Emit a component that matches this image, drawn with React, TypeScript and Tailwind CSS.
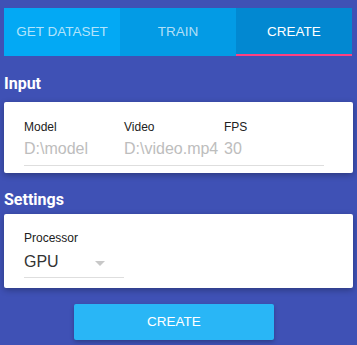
export default function App() {
  const tabs = [
    { label: 'GET DATASET', bg: 'bg-[#03a9f4]', active: false },
    { label: 'TRAIN', bg: 'bg-[#039be5]', active: false },
    { label: 'CREATE', bg: 'bg-[#0288d1]', active: true },
  ];

  const fields = [
    { label: 'Model', value: 'D:\\model' },
    { label: 'Video', value: 'D:\\video.mp4' },
    { label: 'FPS', value: '30' },
  ];

  return (
    <div className="w-[357px] h-[345px] overflow-hidden bg-[#3f51b5] pt-[8px] px-[4px] font-['Liberation_Sans',Arial,sans-serif]">
      <div className="flex w-[348px] h-[48px]">
        {tabs.map((t) => (
          <div
            key={t.label}
            className={`relative flex-1 flex items-center justify-center text-[13.5px] ${t.bg} ${
              t.active ? 'text-white' : 'text-white/70'
            }`}
          >
            {t.label}
            {t.active && <div className="absolute left-0 right-0 bottom-0 h-[2px] bg-[#ff4081]" />}
          </div>
        ))}
      </div>

      <h2 className="mt-[16px] mb-[6px] text-[16px] leading-[24px] font-bold text-white font-['Roboto',sans-serif]">Input</h2>
      <div className="w-[349px] bg-white rounded-[2px] shadow-[0_2px_6px_rgba(0,0,0,0.3)] pt-[17px] pb-[7px] px-[20px]">
        <div className="flex">
          {fields.map((f) => (
            <div key={f.label} className="w-[100px]">
              <div className="text-[12px] leading-[16px] text-[#212121]">{f.label}</div>
              <div className="mt-[2px] h-[29px] border-b border-[#dedede] text-[16px] leading-[24px] text-[#bdbdbd] whitespace-nowrap">
                {f.value}
              </div>
            </div>
          ))}
        </div>
      </div>

      <h2 className="mt-[15px] mb-[2px] text-[16px] leading-[24px] font-bold text-white font-['Roboto',sans-serif]">Settings</h2>
      <div className="w-[349px] bg-white rounded-[2px] shadow-[0_2px_6px_rgba(0,0,0,0.3)] pt-[16px] pb-[10px] px-[20px]">
        <div className="text-[12px] leading-[16px] text-[#212121]">Processor</div>
        <div className="mt-[4px] w-[100px] h-[28px] border-b border-[#dedede] flex items-start justify-between pr-[19px]">
          <span className="text-[16px] leading-[24px] text-[#333]">GPU</span>
          <span className="mt-[11px] w-0 h-0 border-l-[5px] border-r-[5px] border-t-[5px] border-l-transparent border-r-transparent border-t-[#c8c8c8]" />
        </div>
      </div>

      <button className="mt-[16px] ml-[70px] w-[200px] h-[36px] bg-[#29b6f6] text-white text-[13.5px] rounded-[2px] shadow-[0_2px_4px_rgba(0,0,0,0.25)]">
        CREATE
      </button>
    </div>
  );
}
